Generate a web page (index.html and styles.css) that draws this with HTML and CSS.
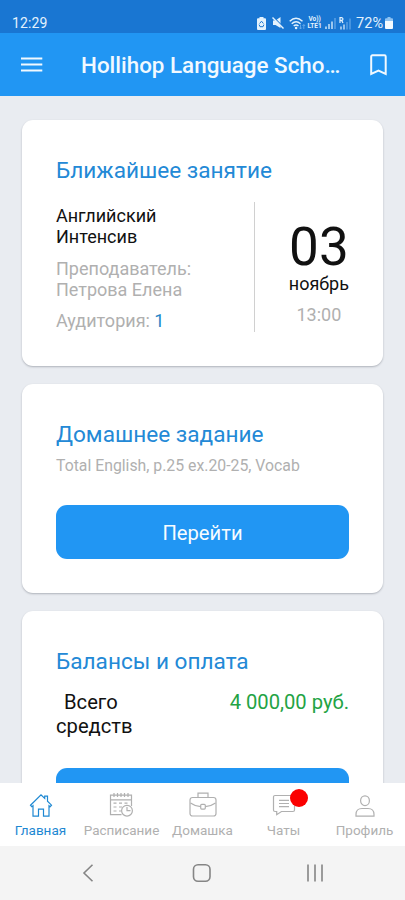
FILE: index.html
```html
<!DOCTYPE html>
<html lang="ru">
<head>
<meta charset="utf-8">
<title>Hollihop Language School</title>
<link rel="stylesheet" href="styles.css">
</head>
<body>
<div class="phone">
  <div class="status">
    <span class="clock">12:29</span>
    <div class="indicators">
      <svg width="9" height="13" viewBox="0 0 9 13"><path d="M2.500 0h4v1.300H8a1 1 0 0 1 1 1V12a1 1 0 0 1-1 1H1a1 1 0 0 1-1-1V2.300a1 1 0 0 1 1-1h1.500z" fill="#e3f2fd"/><path d="M2.600 6.500 4.500 4.200l1.900 2.300M6.900 7.600 6 9.700H3L2.100 7.600" fill="none" stroke="#1976d2" stroke-width="1"/></svg>
      <svg class="mute" width="12" height="12" viewBox="0 0 12 12"><path d="M1 3.500h2.500L8.500 0v11L3.500 8H1z" fill="#e3f2fd"/><path d="M1.500.2l10.800 10.800" stroke="#1976d2" stroke-width="1.200"/><path d="M.5.5l11 11" stroke="#e3f2fd" stroke-width="1.400"/></svg>
      <svg class="wifi" width="17" height="13" viewBox="0 0 17 13"><g fill="none" stroke="#e3f2fd" stroke-width="1.400"><path d="M.7 4.300q6.300-6 12.800 0M2.700 6.800q4.400-4.100 8.800 0M4.700 9.100q2.400-2.200 4.800 0"/></g><circle cx="7.100" cy="11" r="1.300" fill="#e3f2fd"/><path d="M11.500 7.500v4.300M10.200 10.500l1.300 1.500 1.300-1.500M14.800 12V7.700M13.500 9l1.300-1.500L16.100 9" fill="none" stroke="#72b2ed" stroke-width=".8"/></svg>
      <span class="volte"><span>Vo))</span><span>LTE1</span></span>
      <svg class="signal" width="11" height="11" viewBox="0 0 11 11"><path d="M1 8.500V11M4 6v5M7 3.500V11" stroke="#e3f2fd" stroke-width="1.300"/><path d="M10 0v11" stroke="#66a8e8" stroke-width="1.300"/></svg>
      <svg class="roam" width="12" height="13" viewBox="0 0 12 13"><path d="M1 6V.7h1.600a1.300 1.300 0 0 1 0 2.700H1M2.600 3.400 4 6" fill="none" stroke="#e3f2fd" stroke-width="1.200"/><path d="M2 9.500V12.500M5 7.500v5" stroke="#e3f2fd" stroke-width="1.200"/><path d="M8 5v7.500M11 1.500v11" stroke="#66a8e8" stroke-width="1.200"/></svg>
      <span class="percent">72%</span>
      <svg class="battery" width="8" height="12" viewBox="0 0 8 12"><path d="M2.500 0h3v1.200H7a1 1 0 0 1 1 1V4H0V2.200a1 1 0 0 1 1-1h1.500z" fill="#8fc3f2"/><path d="M0 4h8v7a1 1 0 0 1-1 1H1a1 1 0 0 1-1-1z" fill="#f3faff"/></svg>
    </div>
  </div>
  <header class="appbar">
    <svg class="menu" width="22" height="16" viewBox="0 0 22 16"><path d="M0 1.500h21.300M0 7.500h21.300M0 13.500h21.300" stroke="#f1f9ff" stroke-width="2"/></svg>
    <h1>Hollihop Language Scho…</h1>
    <svg class="bookmark" width="17" height="22" viewBox="0 0 17 22"><path d="M1.200 20V2.500a1.200 1.200 0 0 1 1.200-1.200h12.100a1.200 1.200 0 0 1 1.200 1.200V20l-7.250-3.300z" fill="none" stroke="#f1f9ff" stroke-width="2"/></svg>
  </header>
  <main class="feed">
    <section class="card lesson">
      <h2>Ближайшее занятие</h2>
      <div class="lesson-row">
        <div class="lesson-info">
          <p class="dark">Английский<br>Интенсив</p>
          <p>Преподаватель:<br>Петрова Елена</p>
          <p>Аудитория: <a>1</a></p>
        </div>
        <div class="date">
          <span class="day">03</span>
          <span class="month">ноябрь</span>
          <span class="time">13:00</span>
        </div>
      </div>
    </section>
    <section class="card homework">
      <h2>Домашнее задание</h2>
      <p class="task">Total English, p.25 ex.20-25, Vocab</p>
      <button class="action">Перейти</button>
    </section>
    <section class="card balance">
      <h2>Балансы и оплата</h2>
      <div class="sum-row">
        <span class="sum-label">Всего<br>средств</span>
        <span class="sum">4 000,00 руб.</span>
      </div>
      <button class="action" aria-hidden="true"></button>
    </section>
  </main>
  <nav class="tabs">
    <a class="tab active">
      <svg width="24" height="26" viewBox="0 0 24 26"><path d="M1.500 13.200 12 2.800l3.700 3.600V4.200h2.800v5L22.500 13.200l-1.300 1.500-1.200-1v10.500h-5.500v-7H9.500v7H4V13.700l-1.200 1z"/></svg>
      <span>Главная</span>
    </a>
    <a class="tab">
      <svg class="calendar" width="26" height="26" viewBox="0 0 26 26"><path d="M13.500 22.600H2.500V3.200h21V14M2.500 7.800h21M6 1v4M9.500 1v4M13 1v4M16.500 1v4M20 1v4M5.500 11.200h3M11 11.200h3M16.500 11.200h3M5.500 15h3M11 15h3M5.500 19h3M11 19h2M19 15v3.700h3.500"/><circle cx="19" cy="18.700" r="5.400"/></svg>
      <span>Расписание</span>
    </a>
    <a class="tab">
      <svg width="28" height="26" viewBox="0 0 28 26"><rect x="1" y="5.500" width="26" height="18.500" rx="2.500"/><path d="M9 5.500V1.200h10v4.300M1.500 11q5 3.500 10.200 3.700M26.500 11q-5 3.500-10.200 3.700"/><rect x="11.700" y="12.300" width="4.600" height="4.800" rx="1"/></svg>
      <span>Домашка</span>
    </a>
    <a class="tab">
      <svg width="24" height="26" viewBox="0 0 24 26"><path d="M3 3.500h18a1.500 1.500 0 0 1 1.500 1.500v13a1.500 1.500 0 0 1-1.500 1.500H9.500L4.700 22.700v-3.200H3A1.500 1.500 0 0 1 1.500 18V5A1.500 1.500 0 0 1 3 3.500zM7 8.300h10M7 11.500h10M7 14.700h10"/></svg>
      <i class="badge"></i>
      <span>Чаты</span>
    </a>
    <a class="tab">
      <svg width="22" height="26" viewBox="0 0 22 26"><ellipse cx="11" cy="8.700" rx="4.400" ry="4.900"/><path d="M2 24.200v-1.700q0-6 6-6h6q6 0 6 6v1.700z"/></svg>
      <span>Профиль</span>
    </a>
  </nav>
  <div class="sysnav">
    <svg width="12" height="20" viewBox="0 0 12 20"><path d="M10.500 1.700 2 10l8.500 8.300"/></svg>
    <svg class="home" width="20" height="20" viewBox="0 0 20 20"><rect x="1.500" y="1.700" width="16.500" height="16.500" rx="4.500"/></svg>
    <svg width="18" height="20" viewBox="0 0 18 20"><path d="M2 1.500v17M9 1.500v17M16 1.500v17"/></svg>
  </div>
</div>
</body>
</html>
```
FILE: styles.css
```css
* { box-sizing: border-box; }
body { margin: 0; font-family: Roboto, "Noto Sans", sans-serif; }
h1, h2, p { margin: 0; font-weight: 400; }
svg { display: block; flex: none; }
.phone { width: 405px; height: 900px; display: flex; flex-direction: column; overflow: hidden; background: #e9ecf1; }

.status { height: 33px; flex: none; background: #1976d2; color: #e3f2fd; display: flex; justify-content: space-between; padding: 14px 12px 0 12px; }
.clock { font-size: 14px; line-height: 18px; letter-spacing: 0.1px; }
.indicators { display: flex; align-items: center; height: 18px; }
.mute { margin-left: 6px; }
.wifi { margin-left: 5px; }
.volte { display: flex; flex-direction: column; align-items: center; width: 15px; margin-left: 1px; font-size: 6.500px; line-height: 7px; font-weight: 700; white-space: nowrap; }
.signal { margin-left: 3px; }
.roam { margin-left: 3px; }
.percent { font-size: 14.500px; line-height: 18px; margin-left: 5px; padding-top: 1px; }
.battery { margin-left: 2px; }

.appbar { height: 63px; flex: none; background: #2196f3; display: flex; align-items: center; padding: 0 18px 0 21px; }
.appbar h1 { flex: 1; margin-left: 38px; color: #f1f9ff; font-size: 22.400px; line-height: 30px; font-weight: 500; white-space: nowrap; }

.feed { flex: 1; min-height: 0; overflow: hidden; padding: 24px 22px 0; display: flex; flex-direction: column; gap: 18px; }
.card { flex: none; background: #fff; border-radius: 11px; padding: 37px 34px 0; box-shadow: 0 1px 2px rgba(40, 45, 60, 0.3); }
.card h2 { font-size: 22.600px; line-height: 28px; color: #2389d6; white-space: nowrap; }
.lesson { height: 246px; }
.homework { height: 209px; }
.balance { height: 280px; }

.lesson-row { display: flex; margin-top: 17px; height: 130px; }
.lesson-info { width: 199px; border-right: 1px solid #d0d0d0; padding-top: 3px; font-size: 18px; line-height: 21px; color: #b0b0b0; white-space: nowrap; }
.lesson-info p { margin-bottom: 10.500px; }
.lesson-info .dark { color: #111; }
.lesson-info a { color: #1e88c9; }
.date { flex: 1; display: flex; flex-direction: column; align-items: center; padding: 14px 0 0 34px; color: #111; }
.day { font-size: 53px; line-height: 62px; height: 58px; }
.month { font-size: 18px; line-height: 20px; }
.time { font-size: 18px; line-height: 20px; margin-top: 11px; color: #b0b0b0; }

.task { font-size: 15.800px; line-height: 20px; margin-top: 7px; color: #b0b0b0; white-space: nowrap; }
.action { display: block; width: 293px; height: 54px; border: 0; border-radius: 11px; background: #2196f3; color: #f7fcff; font: 400 20.200px/54px Roboto, sans-serif; padding: 1px 0 0; margin-top: 29px; }

.sum-row { display: flex; justify-content: space-between; margin-top: 14px; font-size: 20.200px; line-height: 24px; white-space: nowrap; }
.sum-label { color: #111; text-indent: 8px; }
.sum { color: #23a344; }
.balance .action { margin-top: 30px; }

.tabs { height: 63px; flex: none; background: #fff; display: grid; grid-template-columns: repeat(5, 81px); }
.tab { position: relative; display: flex; flex-direction: column; align-items: center; padding-top: 9px; color: #b0b0b0; font-size: 13.500px; line-height: 18px; }
.tab svg { fill: none; stroke: currentColor; stroke-width: 1.200; }
.tab .calendar { margin-right: 2px; }
.tab span { margin-top: 3px; }
.tab.active { color: #1e88d2; }
.badge { position: absolute; left: 47px; top: 6px; width: 18px; height: 18px; border-radius: 50%; background: #fb0000; }

.sysnav { height: 54px; flex: none; background: #f4f4f4; display: flex; justify-content: space-between; align-items: center; padding: 0 81px 0 82px; }
.sysnav svg { fill: none; stroke: #858585; stroke-width: 1.600; }
.sysnav .home { margin-left: 3px; }
```
